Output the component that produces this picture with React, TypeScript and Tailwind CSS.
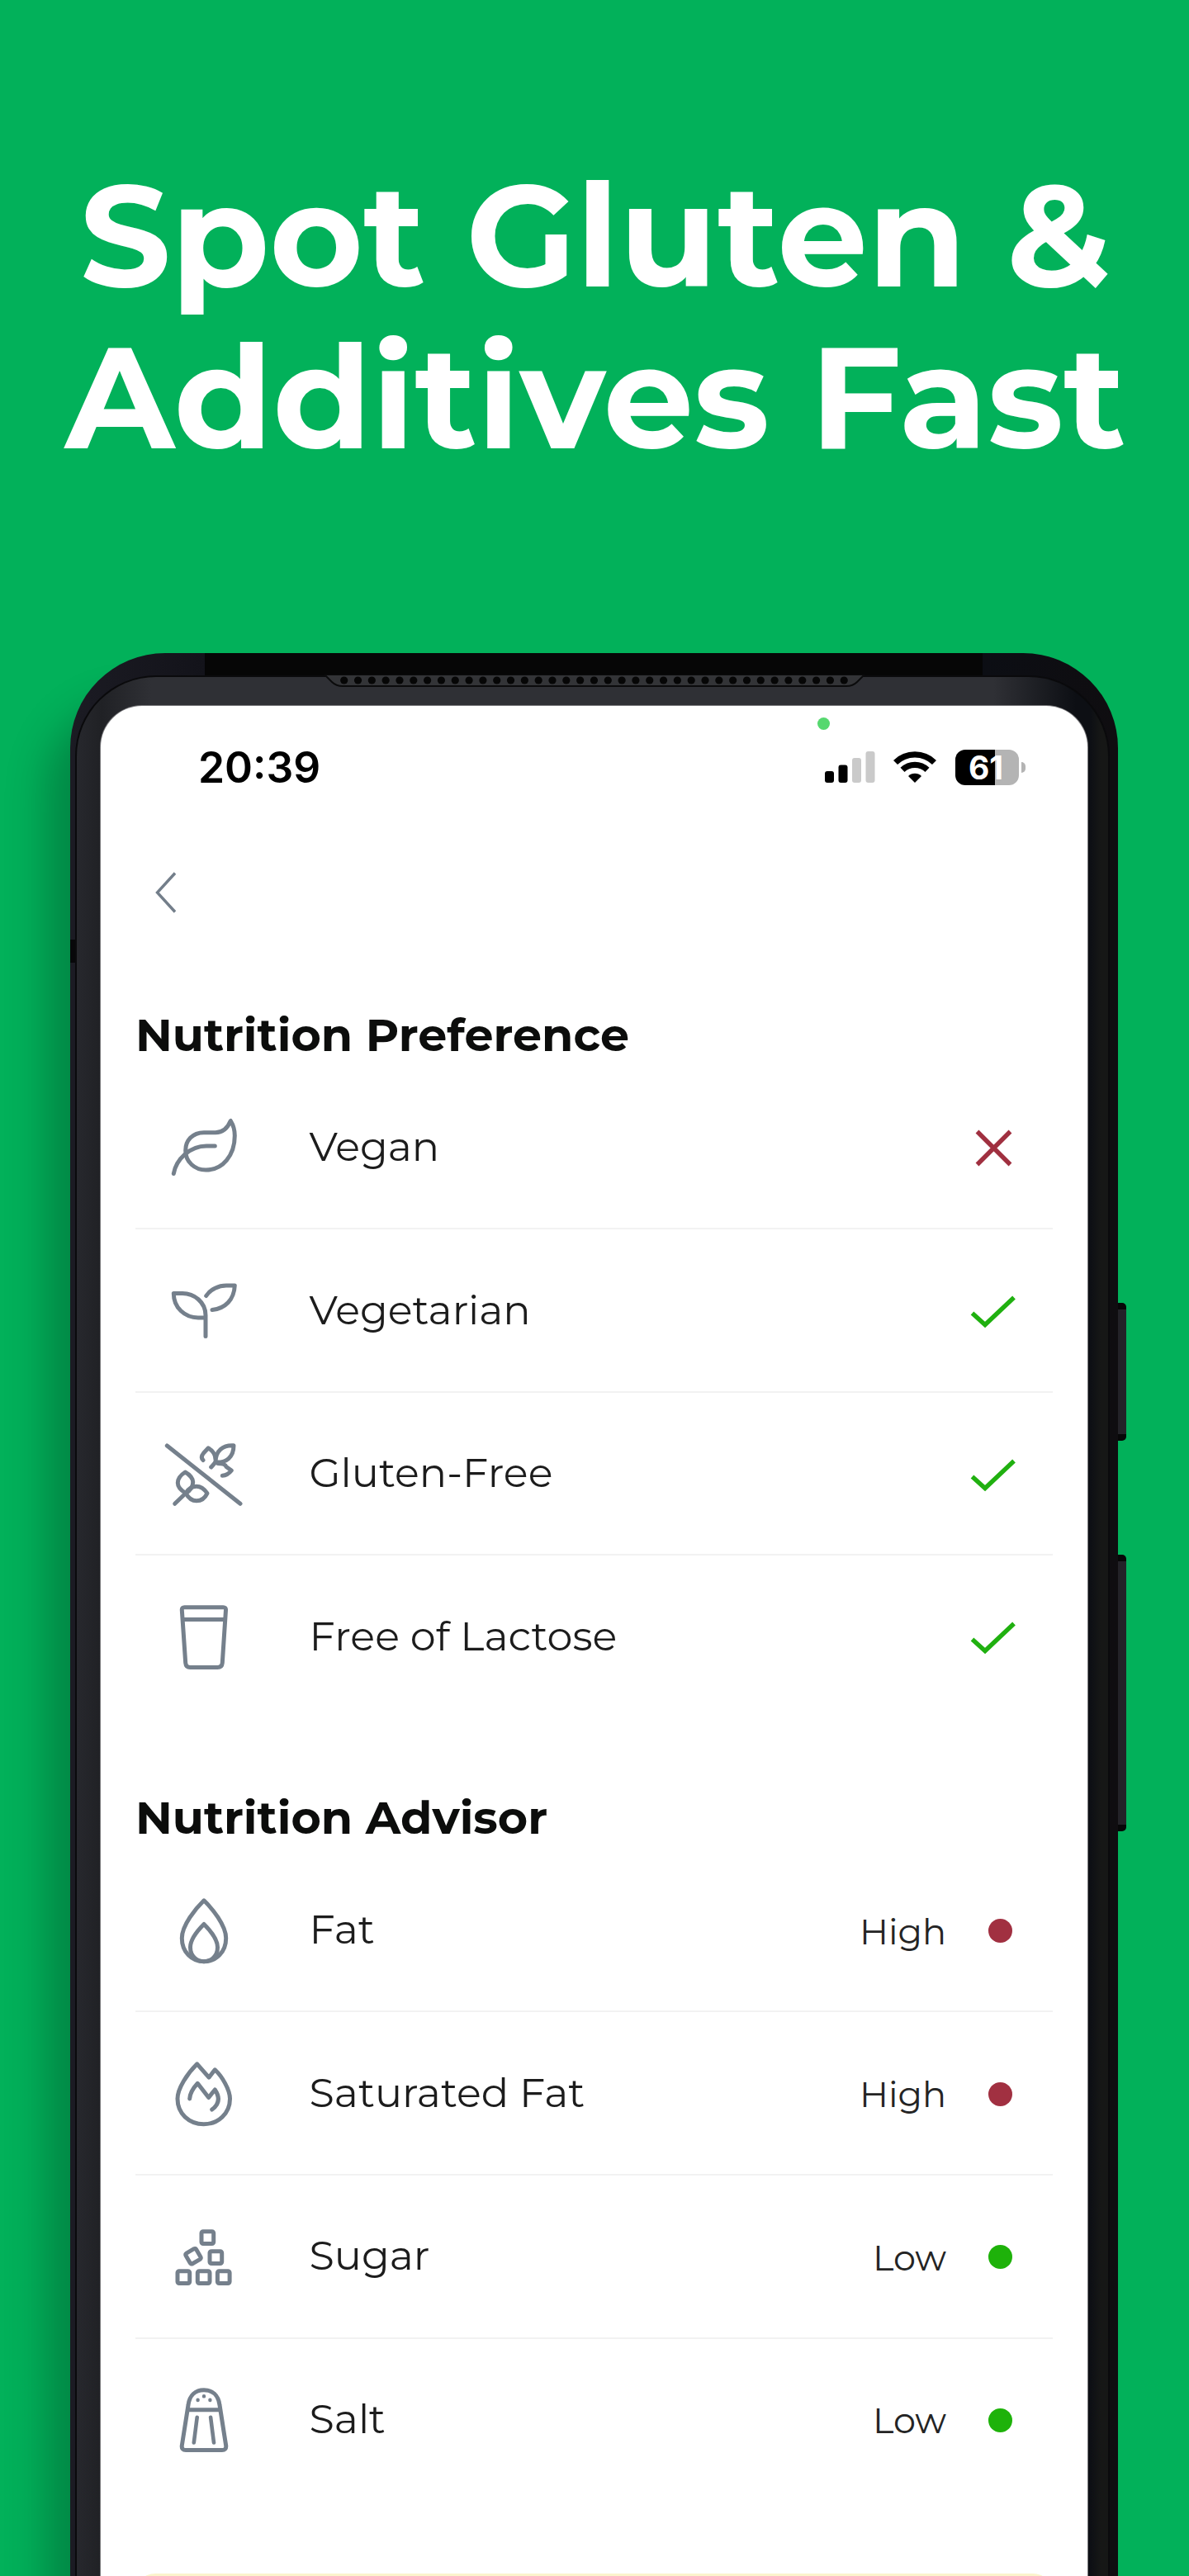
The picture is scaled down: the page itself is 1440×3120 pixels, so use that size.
import React from 'react';

type Item = {
  label: string;
  icon: React.ReactNode;
  ok?: boolean;
  level?: 'High' | 'Low';
};

const RowIcon = ({ children }: { children: React.ReactNode }) => (
  <svg
    viewBox="0 0 120 120"
    className="w-[120px] h-[120px] shrink-0"
    fill="none"
    stroke="#75808c"
    strokeWidth="5"
    strokeLinecap="round"
    strokeLinejoin="round"
  >
    {children}
  </svg>
);

const VeganIcon = () => (
  <RowIcon>
    <path d="M89.3 28.5C86 36.5 80 42.7 71 42.7H57C43 42.7 34.7 52.5 34.7 64.5C34.7 78.5 46 88 59.3 88C80 88 94.3 70 94.3 46.5C94.3 39.5 92.5 33.5 89.3 28.5Z" />
    <path d="M20.3 92.5C23.5 75 40 59 60 59H70.3" />
  </RowIcon>
);

const VegetarianIcon = () => (
  <RowIcon>
    <path d="M59 91.5V66C59 50 45 39.5 31 39.5H20.3C20.3 57 34 69 50 69H59" />
    <path d="M59.7 42.5C65 34.3 75 30 84 30H94.3C93.5 47 83 58 67 59.5" />
  </RowIcon>
);

const GlutenIcon = () => (
  <RowIcon>
    <path d="M12.3 26L101 96.3" />
    <path d="M21.7 96.3L35 83.5" />
    <path d="M34.3 58C28 62 25.3 66 25.3 71C25.3 76 29 80 35 83.5C41 80 43.7 76 43.7 70C43.7 66 40 61 34.3 58Z" />
    <path d="M35 83.5C38 78 43 75.3 48 75.3C53 75.3 57 78 61 83.6C58 90 53 92.8 48 92.8C43 92.8 38 89 35 83.5Z" />
    <path d="M93 25.8C80 25 71 32 71 46C84 47 93 40 93 25.8Z" />
    <path d="M71 46L65.7 52" />
    <path d="M56 43.5C53.5 41 54 38 56.5 35L62.3 28.8C67 31.5 70.5 35 71 42" />
    <path d="M74 47.5C79 47.5 83 48.5 84 51.5L90.3 56C88 59 84 62 79.3 62.3" />
  </RowIcon>
);

const GlassIcon = () => (
  <RowIcon>
    <path d="M33.5 24.7H80.3C82.5 24.7 83.7 26 83.5 28L79.3 92C79 95.5 77 97.5 73.5 97.5H40.3C37 97.5 35 95.5 34.7 92L30.3 28C30.1 26 31.3 24.7 33.5 24.7Z" />
    <path d="M32 39.5H82" />
  </RowIcon>
);

const FatIcon = () => (
  <RowIcon>
    <path d="M57 23.8C47 33.5 30.3 54 30.3 69.5C30.3 86 42 97.7 57 97.7C72 97.7 83.7 86 83.7 69.5C83.7 54 67 33.5 57 23.8Z" />
    <path d="M57 52.5C50 59.5 40.5 71 40.5 80.5C40.5 91 48 97.7 57 97.7C66 97.7 73.5 91 73.5 80.5C73.5 71 64 59.5 57 52.5Z" />
  </RowIcon>
);

const SaturatedFatIcon = () => (
  <RowIcon>
    <path d="M48.7 24.8L63 41.2L70.3 31.8C79 40 88.5 56 88.5 67C88.5 85 74 97.7 56.7 97.7C39 97.7 25 85 25 67C25 54 37 36.5 48.7 24.8Z" />
    <path d="M39.7 67C40 60 45 53 49.3 48.3L62.7 65.5L70.3 56C77 66 75 74 66.7 80" />
  </RowIcon>
);

const SugarIcon = () => (
  <RowIcon>
    <rect x="54" y="29.8" width="14.7" height="14.7" rx="2" />
    <rect x="64" y="53.8" width="14.7" height="14.7" rx="2" />
    <rect x="36.7" y="52.4" width="14.7" height="14.7" rx="2" transform="rotate(-30 44 59.8)" />
    <rect x="25" y="77.8" width="14.7" height="14.7" rx="2" />
    <rect x="49.3" y="77.8" width="14.7" height="14.7" rx="2" />
    <rect x="73.4" y="77.8" width="14.7" height="14.7" rx="2" />
  </RowIcon>
);

const SaltIcon = () => (
  <RowIcon>
    <path d="M38 43C39.5 31 47 24.8 57 24.8C67 24.8 74.5 31 76 43L83.7 92C84.2 95.5 82.3 97.6 79 97.6H35C31.7 97.6 29.8 95.5 30.3 92Z" />
    <path d="M37.5 48.8H76.5" />
    <path d="M48.7 57.8L44.8 88.5M65.1 57.8L69 88.5" strokeWidth="4.6" />
    <path d="M49.6 36.8V37M57 32.2V32.4M64.4 36.8V37" strokeWidth="4.4" />
  </RowIcon>
);

const preferences: Item[] = [
  { label: 'Vegan', icon: <VeganIcon />, ok: false },
  { label: 'Vegetarian', icon: <VegetarianIcon />, ok: true },
  { label: 'Gluten-Free', icon: <GlutenIcon />, ok: true },
  { label: 'Free of Lactose', icon: <GlassIcon />, ok: true },
];

const advisor: Item[] = [
  { label: 'Fat', icon: <FatIcon />, level: 'High' },
  { label: 'Saturated Fat', icon: <SaturatedFatIcon />, level: 'High' },
  { label: 'Sugar', icon: <SugarIcon />, level: 'Low' },
  { label: 'Salt', icon: <SaltIcon />, level: 'Low' },
];

const Mark = ({ ok }: { ok: boolean }) => (
  <svg
    viewBox="0 0 60 60"
    className="w-[60px] h-[60px] mr-[42px]"
    fill="none"
    stroke={ok ? '#20b010' : '#a03040'}
    strokeWidth="5.4"
  >
    {ok ? <path d="M4.5 33.5L20 47.5L55 14.5" /> : <path d="M10.5 11.5L50.5 51.5M50.5 11.5L10.5 51.5" />}
  </svg>
);

const Level = ({ level }: { level: 'High' | 'Low' }) => (
  <div className="flex items-center gap-[51px] mr-[49px] pt-[2px]">
    <span className="text-[43px] leading-[52px] pt-[2px] text-[#242424]">{level}</span>
    <span
      className={
        level === 'High'
          ? 'w-[29px] h-[29px] rounded-full bg-[#a13041]'
          : 'w-[29px] h-[29px] rounded-full bg-[#1eb20a]'
      }
    />
  </div>
);

const Section = ({ title, items }: { title: string; items: Item[] }) => (
  <section>
    <h2 className="h-[70.7px] text-[55.5px] leading-[64px] font-bold text-[#0c0d0c] whitespace-nowrap">
      {title}
    </h2>
    <ul>
      {items.map((item) => (
        <li
          key={item.label}
          className="flex items-center h-[197.6px] pl-[26px] border-b-2 border-[#f2f2f2] last:border-transparent"
        >
          {item.icon}
          <span className="ml-[64.5px] flex-1 pb-[3px] text-[49.3px] leading-[60px] text-[#1c1c1c]">
            {item.label}
          </span>
          {item.level ? <Level level={item.level} /> : <Mark ok={!!item.ok} />}
        </li>
      ))}
    </ul>
  </section>
);

const StatusBar = () => (
  <div className="relative flex items-center justify-between h-[148px] pl-[118px] pr-[75px]">
    <span className="absolute left-[868px] top-[14px] w-[15px] h-[15px] rounded-full bg-[#56d86f]" />
    <span className="font-['Inter'] font-semibold text-[51.5px] leading-[60px] text-black">20:39</span>
    <div className="flex items-center">
      <svg viewBox="0 0 61 38" className="w-[61px] h-[38px]">
        <rect x="0" y="24" width="11" height="14" rx="3" fill="#000" />
        <rect x="16.5" y="16.5" width="11" height="21.5" rx="3" fill="#000" />
        <rect x="33" y="8" width="11" height="30" rx="3" fill="#cacaca" />
        <rect x="49.5" y="0" width="11" height="38" rx="3" fill="#cacaca" />
      </svg>
      <svg viewBox="0 0 52 38" className="w-[52px] h-[38px] ml-[22px]" fill="none" stroke="#000">
        <path d="M2.5 13.5A33.5 33.5 0 0 1 49.5 13.5" strokeWidth="7.2" />
        <path d="M11 22.4A21.5 21.5 0 0 1 41 22.4" strokeWidth="7.2" />
        <path d="M26 38L18 30A11.5 11.5 0 0 1 34 30Z" fill="#000" stroke="none" />
      </svg>
      <div className="flex items-center justify-center ml-[23px] pr-[3px] w-[77px] h-[43px] rounded-[12px] bg-linear-to-r from-black from-62% to-[#b4b4b4] to-62%">
        <span className="font-['Inter'] font-bold text-[39px] leading-none text-white">61</span>
      </div>
      <span className="ml-[3px] w-[5px] h-[13px] rounded-r-full bg-[#b4b4b4]" />
    </div>
  </div>
);

const speakerHoles = Array.from({ length: 37 }, (_, i) => 23.7 + i * 16.82);

const Speaker = () => (
  <svg viewBox="0 0 654 15" className="absolute left-[308px] top-[26px] w-[654px] h-[15px]">
    <path d="M0 0H654L645 9Q640 14 632 14H22Q14 14 9 9Z" fill="#333437" stroke="#0b0b0c" strokeWidth="2" />
    {speakerHoles.map((x) => (
      <circle key={x} cx={x} cy="7" r="4.6" fill="#060606" />
    ))}
  </svg>
);

const App = () => {
  return (
    <div className="w-[1440px] h-[3120px] overflow-hidden bg-[#02b15a] font-['Montserrat','Inter',sans-serif]">
      <h1 className="pt-[187px] pl-[2px] h-[791px] text-center text-[173.2px] leading-[196px] font-bold text-white whitespace-nowrap">
        Spot Gluten &amp;
        <br />
        Additives Fast
      </h1>

      <div className="relative ml-[85px] w-[1269px] h-[2400px]">
        {/* side keys */}
        <div className="absolute left-[1262px] top-[787px] w-[17px] h-[167px] rounded-[5px] bg-[#232228] border-y-8 border-l-3 border-[#070708]" />
        <div className="absolute left-[1262px] top-[1092px] w-[17px] h-[335px] rounded-[5px] bg-[#232228] border-y-8 border-l-3 border-[#070708]" />

        <div className="relative h-full pt-[27px] pl-[6px] pr-[10px] rounded-t-[115px] bg-[linear-gradient(to_right,#1b1b23_0,#13131a_163px,#060606_163px,#060606_1105px,#0c0e14_1105px,#0f0d10_1269px)] shadow-[-40px_50px_50px_-10px_rgba(0,0,0,0.24)]">
          <div className="h-full pt-[35px] pl-[29px] pr-[25px] rounded-t-[98px] border-t-2 border-x-2 border-[#0a0a0c] bg-[linear-gradient(to_right,#27282d_0,#202125_30px,#2f3035_90px,#2f3035_1110px,#0d0f14_1210px,#0d0f14_1228px,#161716_1240px)]">
            <div className="h-full px-[42px] rounded-t-[50px] bg-white shadow-[0_0_0_1px_#77777a]">
              <div className="-mx-[42px]">
                <StatusBar />
              </div>
              <div className="flex items-center h-[155px] pl-[24px]">
                <svg viewBox="0 0 26 50" className="w-[26px] h-[50px]" fill="none" stroke="#737e8a" strokeWidth="3.4">
                  <path d="M24 1.5L2.5 25L24 48.5" />
                </svg>
              </div>
              <div className="flex flex-col gap-[87px] pt-[63px]">
                <Section title="Nutrition Preference" items={preferences} />
                <Section title="Nutrition Advisor" items={advisor} />
                <div className="h-[120px] rounded-[24px] bg-[#fbf4cc]" />
              </div>
            </div>
          </div>
          <Speaker />
          {/* antenna gap on the left edge */}
          <div className="absolute left-0 top-[347px] w-[6px] h-[28px] bg-[#08080a]" />
        </div>
      </div>
    </div>
  );
};

export default App;
